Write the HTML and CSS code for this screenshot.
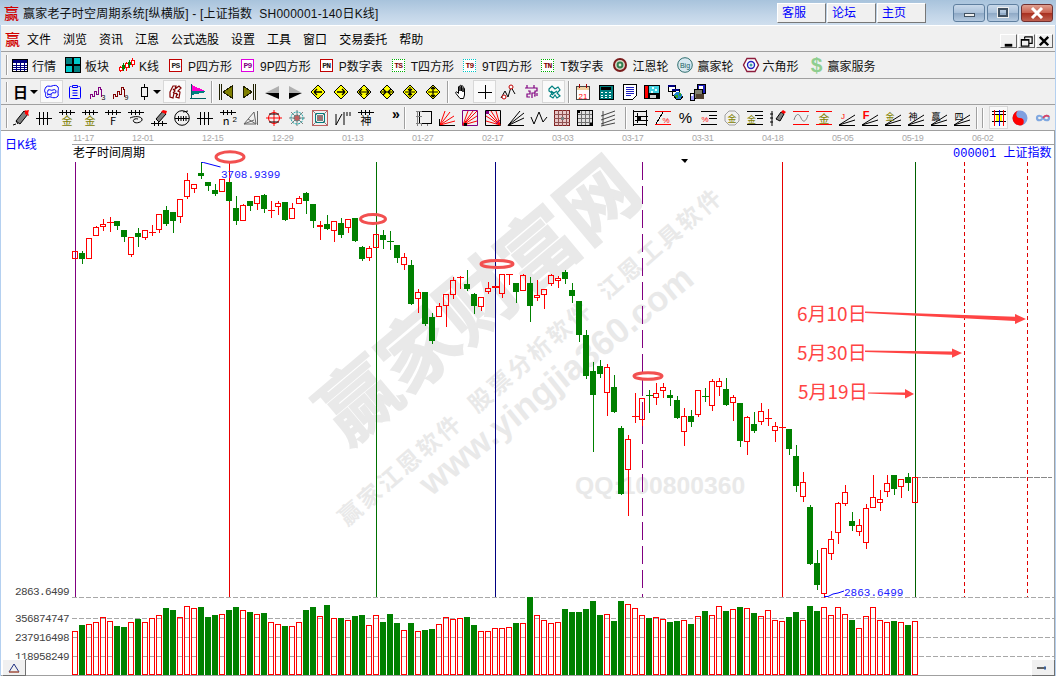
FILE: index.html
```html
<!DOCTYPE html>
<html lang="zh-CN">
<head>
<meta charset="utf-8">
<title>赢家老子时空周期系统</title>
<link rel="stylesheet" href="styles.css">
</head>
<body>
<div class="window">
  <header class="titlebar">
    <span class="applogo">赢</span>
    <span class="apptitle">赢家老子时空周期系统[纵横版] - [上证指数&nbsp; SH000001-140日K线]</span>
    <span class="linkbtn">客服</span><span class="linkbtn">论坛</span><span class="linkbtn">主页</span>
    <span class="wbtn wmin"><i></i></span><span class="wbtn wmax"><i></i></span>
    <span class="wbtn wclose"><svg width="14" height="12" viewBox="0 0 14 12"><path d="M2 1l10 10M12 1L2 11" stroke="#fff" stroke-width="3"/></svg></span>
  </header>

  <nav class="menubar">
    <span class="menulogo">赢</span>
    <span class="mi">文件</span><span class="mi">浏览</span><span class="mi">资讯</span><span class="mi">江恩</span><span class="mi">公式选股</span><span class="mi">设置</span><span class="mi">工具</span><span class="mi">窗口</span><span class="mi">交易委托</span><span class="mi">帮助</span>
    <span class="mdi mdi-first"><svg width="16" height="13" viewBox="0 0 16 13"><path d="M4 9h8v3H4z"/></svg></span>
    <span class="mdi"><svg width="16" height="13" viewBox="0 0 16 13"><path d="M6 1.500h8v7h-3M6 1.500v2M2.500 4.500h8v7h-8zM2.500 5h8" fill="none" stroke="#000" stroke-width="1.300"/></svg></span>
    <span class="mdi"><svg width="16" height="13" viewBox="0 0 16 13"><path d="M3 1.500l9 9M12 1.500l-9 9" stroke="#000" stroke-width="2.600"/></svg></span>
  </nav>

  <div class="toolbar tbtext">
    <i class="grip"></i>
    <span class="ti"><svg class="ic" viewBox="0 0 16 16"><path d="M.5 2.500h15v12H.5z" fill="#fff" stroke="#000"/><path d="M1 3h14v3H1z" fill="#000080"/><path d="M1 8.500h14M1 10.500h14M1 12.500h14M4.500 6v8M8.500 6v8M12.500 6v8" stroke="#000080"/></svg>行情</span>
    <span class="ti"><svg class="ic" viewBox="0 0 16 16"><path d="M.5.5h7v7h-7zM8.500.5h7v7h-7zM.5 8.500h7v7h-7zM8.500 8.500h7v7h-7z" stroke="#000"/><path d="M9 1h6v6H9zM1 9h6v6H1z" fill="#00c8c8"/><path d="M1 1h6v6H1zM9 9h6v6H9z" fill="#008080"/></svg>板块</span>
    <span class="ti ti-k"><svg class="ic" viewBox="0 0 16 16"><path d="M2.500 9v6M8.500 5v9M14.500 1v9" stroke="#f00"/><path d="M5.500 6v8M11.500 3v8" stroke="#008000"/><path d="M1 10h3v3H1zM7 6h3v4H7zM13 3h3v4h-3z" fill="#fff" stroke="#f00"/><path d="M4 8h3v4H4zM10 5h3v3h-3z" fill="#008000"/></svg>K线</span>
    <span class="ti ti-s"><span class="tag tag-ps">PS</span>P四方形</span>
    <span class="ti ti-s"><span class="tag tag-p9">P9</span>9P四方形</span>
    <span class="ti ti-s"><span class="tag tag-ps">PN</span>P数字表</span>
    <span class="ti ti-s"><span class="tag tag-ts">TS</span>T四方形</span>
    <span class="ti ti-s"><span class="tag tag-t9">T9</span>9T四方形</span>
    <span class="ti ti-s"><span class="tag tag-ts">TN</span>T数字表</span>
    <span class="ti"><svg class="ic sm" viewBox="0 0 16 16"><circle cx="8" cy="8" r="7" fill="#7a1c1c"/><circle cx="8" cy="8" r="5" fill="#d8d8c8"/><circle cx="8" cy="8" r="3.400" fill="#2f7f4f"/><circle cx="8" cy="8" r="1.400" fill="#e8e8d8"/></svg>江恩轮</span>
    <span class="ti"><svg class="ic sm" viewBox="0 0 16 16"><circle cx="8" cy="8" r="7.300" fill="#d8e8f0" stroke="#2f6f6f"/><text x="8" y="11" class="tiny tealtxt">Big</text></svg>赢家轮</span>
    <span class="ti"><svg class="ic sm" viewBox="0 0 16 16"><path d="M4 1.500h8L15.500 8 12 14.500H4L.5 8z" fill="#fff" stroke="#8c1c3c" stroke-width="1.400"/><circle cx="8" cy="8" r="3.500" fill="#fff" stroke="#2020c0" stroke-width="1.400"/><circle cx="8" cy="8" r="1.500" fill="#40a0a0"/></svg>六角形</span>
    <span class="ti ti-d"><span class="dollar">$</span>赢家服务</span>
  </div>

  <div class="toolbar">
    <i class="grip"></i>
    <span class="tb"><b class="ri">日</b></span><span class="ddarrow"></span>
    <span class="tb on"><svg class="ic sm" viewBox="0 0 16 16"><path d="M2 3c2-2 4 0 6-1s5-1 6 1 0 3 0 5 1 4-1 5-4 1-6 0-4 2-5 0 0-3-1-5 0-3 1-5zM4 6c2-1 3 1 5 0s3 0 3 2-3 0-4 1-2 2-4 1 0-2 0-4zM3 11c2-1 3 0 5 0" fill="none" stroke="#00f"/></svg></span>
    <span class="tb"><svg class="ic sm" viewBox="0 0 16 16"><path d="M4.500 2.500h-1a1 1 0 0 0-1 1v10a1 1 0 0 0 1 1h9a1 1 0 0 0 1-1v-10a1 1 0 0 0-1-1h-1M5.500 1.500h5v2h-5zM5.500 6.500h5M5.500 9h5M5.500 11.500h5" fill="none" stroke="#00f"/></svg></span>
    <span class="tb"><svg class="ic" viewBox="0 0 16 16"><path d="M.5 14.500v-4h2v2h2v-5h2v3h2v-7h2v2h1v7" fill="none" stroke="#800080" stroke-width="1"/><text x="11.500" y="15.500" class="micro">3</text></svg></span>
    <span class="tb"><svg class="ic" viewBox="0 0 16 16"><path d="M.5 14.500v-4h2v2h2v-5h2v3h2v-7h2v2h1v7" fill="none" stroke="#800000" stroke-width="1"/><text x="11.500" y="15.500" class="micro">9</text></svg></span>
    <span class="tb"><svg class="ic" viewBox="0 0 16 16"><path d="M8.500 0v4M8.500 12v4M5.500 3.500h6v9h-6z" fill="none" stroke="#000"/></svg></span><span class="ddarrow"></span>
    <span class="tb on"><svg class="ic sm" viewBox="0 0 16 16"><path d="M3 8l3-6h3l-1 3 4-3 2 2-3 3 2 1-1 6-3-1 1-3-3-1-1 5-3-1zM6 5l2 2-2 2M9 9l2 2" fill="none" stroke="#800000" stroke-width="1.200"/></svg></span>
    <span class="tb"><svg class="ic" viewBox="0 0 16 16"><path d="M2 1l13 6H2z" fill="#ff00d0"/><path d="M2 7h11l3 1-14 3z" fill="#008080"/><path d="M1.500 0v15M0 14.500h16" stroke="#006060"/></svg></span>
    <i class="sep"></i>
    <span class="tb"><svg class="ic" viewBox="0 0 16 16"><path d="M14 2L5 8l9 6z" fill="#808000" stroke="#202000"/><path d="M1 0h1v16H1zM3 0h1v16H3z" fill="#202000"/></svg></span>
    <span class="tb"><svg class="ic" viewBox="0 0 16 16"><path d="M2 2l9 6-9 6z" fill="#808000" stroke="#202000"/><path d="M12 0h1v16h-1zM14 0h1v16h-1z" fill="#202000"/></svg></span>
    <span class="tb"><svg class="ic sm" viewBox="0 0 16 16"><path d="M1 9l14-7v7z" fill="#b0b0b0"/><path d="M1 9l14 6V9z" fill="#000"/></svg></span>
    <span class="tb"><svg class="ic sm" viewBox="0 0 16 16"><path d="M15 9L2 2v7z" fill="#b0b0b0"/><path d="M15 9L2 15V9z" fill="#000"/></svg></span>
    <span class="tb"><svg class="ic sm" viewBox="0 0 16 16"><path d="M8 1l7 7-7 7-7-7z" fill="#ff0" stroke="#000"/><path d="M4 8h8M4 8l3-3M4 8l3 3" stroke="#000" stroke-width="1.300" fill="none"/></svg></span>
    <span class="tb"><svg class="ic sm" viewBox="0 0 16 16"><path d="M8 1l7 7-7 7-7-7z" fill="#ff0" stroke="#000"/><path d="M4 8h8M12 8L9 5M12 8l-3 3" stroke="#000" stroke-width="1.300" fill="none"/></svg></span>
    <span class="tb"><svg class="ic sm" viewBox="0 0 16 16"><path d="M8 1l7 7-7 7-7-7z" fill="#ff0" stroke="#000"/><path d="M3 8h10M3 8l3-3M3 8l3 3M13 8l-3-3M13 8l-3 3" stroke="#000" stroke-width="1.200" fill="none"/></svg></span>
    <span class="tb"><svg class="ic sm" viewBox="0 0 16 16"><path d="M8 1l7 7-7 7-7-7z" fill="#ff0" stroke="#000"/><path d="M2 8h12M7 8L4 5M7 8l-3 3M9 8l3-3M9 8l3 3" stroke="#000" stroke-width="1.200" fill="none"/></svg></span>
    <span class="tb"><svg class="ic sm" viewBox="0 0 16 16"><path d="M8 1l7 7-7 7-7-7z" fill="#ff0" stroke="#000"/><path d="M3 8h10M8 3v10M8 7L6 5M8 7l2-2M8 9l-2 2M8 9l2 2" stroke="#000" stroke-width="1.200" fill="none"/></svg></span>
    <span class="tb"><svg class="ic sm" viewBox="0 0 16 16"><path d="M8 1l7 7-7 7-7-7z" fill="#ff0" stroke="#000"/><path d="M3 8h10M8 3v10M8 3L6 5M8 3l2 2M8 13l-2-2M8 13l2-2" stroke="#000" stroke-width="1.200" fill="none"/></svg></span>
    <i class="sep sep-wide"></i>
    <span class="tb"><svg class="ic sm" viewBox="0 0 16 16"><path d="M6 14.500l-4-5c-1-1 0-2 1-1.500l1.500 1.500V3c0-1 1.500-1 1.500 0v4-5c0-1 1.500-1 1.500 0v5-4.500c0-1 1.500-1 1.500 0V8 4.500c0-1 1.500-1 1.500 0V11l-1 3.500z" fill="#fff" stroke="#000"/></svg></span>
    <span class="tb on"><svg class="ic" viewBox="0 0 16 16"><path d="M8 1v14M1 8h14" stroke="#000"/></svg></span>
    <span class="tb"><svg class="ic sm" viewBox="0 0 16 16"><path d="M1 14l4-7 3 6 3-10 4 7" fill="none" stroke="#000"/><circle cx="4" cy="13" r="2" fill="#fff" stroke="#c00000"/><circle cx="11" cy="3" r="2" fill="#fff" stroke="#c00000"/></svg></span>
    <span class="tb"><svg class="ic sm" viewBox="0 0 16 16"><path d="M2 4h12v3h-2v2H9v5M4 4V1M11 4V1M5 7h2v3H4v3h3M12 9v3h-1M14 9v3" fill="none" stroke="#800080" stroke-width="1.200"/></svg></span>
    <span class="tb on"><svg class="ic sm" viewBox="0 0 16 16"><path d="M3 5l3-3 3 3 3-2 2 3-3 3 3 3-3 2-2-3-2 3-3-2 2-3-3-2zM5 7l3 2 3-2M6 11l2-2" fill="none" stroke="#008080" stroke-width="1.200"/></svg></span>
    <i class="sep sep-wide"></i>
    <span class="tb"><svg class="ic" viewBox="0 0 16 16"><path d="M1.500 2.500h13v13h-13z" fill="#fff" stroke="#444"/><path d="M2 3h12v3H2z" fill="#f0d0a0"/><path d="M4.500 0v4M11.500 0v4" stroke="#a00000"/><text x="8" y="14.500" class="tiny redtxt">21</text></svg></span>
    <span class="tb"><svg class="ic" viewBox="0 0 16 16"><path d="M1 1h14v14H1z" fill="#008080" stroke="#000"/><path d="M3 3h10v3H3z" fill="#000"/><path d="M3 8h2v1H3zM7 8h2v1H7zM11 8h2v1h-2zM3 10.500h2v1H3zM7 10.500h2v1H7zM11 10.500h2v1h-2zM3 13h2v1H3zM7 13h2v1H7zM11 13h2v1h-2z" fill="#fff"/></svg></span>
    <span class="tb"><svg class="ic" viewBox="0 0 16 16"><path d="M2.500.5h13v11l-4 4h-9z" fill="#fff" stroke="#000"/><path d="M5 3.500h8M5 5.500h8M5 7.500h8M5 9.500h8M5 11.500h5" stroke="#2020c0"/></svg></span>
    <span class="tb"><svg class="ic" viewBox="0 0 16 16"><path d="M0 1h16v14H0z" fill="#000"/><path d="M1 2h3v12H1z" fill="#f00"/><path d="M5 2h10v7H5z" fill="#40d0e0"/><path d="M8 3h2v2H8zM11 5h2v2h-2zM7 7h2v2H7z" fill="#e0ffff"/><path d="M6 11h6v3H6z" fill="#d0d0d0"/></svg></span>
    <span class="tb"><svg class="ic" viewBox="0 0 16 16"><path d="M1 1h7v6H1zM5 5h7v6H5z" fill="#fff" stroke="#000"/><path d="M1 1h7v2H1zM5 5h7v2H5z" fill="#000080"/><circle cx="11" cy="12" r="4" fill="#2080d0"/><path d="M8 11h3v3H9zM12 9h2v3h-2z" fill="#30a030"/><path d="M7 12l2 3h5l2-3" fill="none" stroke="#000"/></svg></span>
    <span class="tb"><svg class="ic" viewBox="0 0 16 16"><path d="M7 0h8v9H7z" fill="#2020c0" stroke="#000"/><path d="M9 2h4v3H9z" fill="#fff"/><path d="M4 5h8v9H4z" fill="#808070" stroke="#000"/><path d="M0 9h4v7H0z" fill="#a0a0ff" stroke="#000"/><path d="M1 10h2v2H1z" fill="#fff"/><path d="M6 10h8v5H6z" fill="#504030"/></svg></span>
  </div>

  <div class="toolbar toolbar-last">
    <i class="grip"></i>
    <span class="tb"><svg class="ic sm" viewBox="0 0 16 16"><path d="M3 11L11 1l4 3-8 10z" fill="#808080" stroke="#000"/><path d="M11 1l4 3 1-4z" fill="#f00"/><path d="M12 0l3 3 1 3-4-2z" fill="#f00"/><path d="M0 15l3-1M3 11l2 3" stroke="#000" fill="none"/></svg></span>
    <span class="tb"><svg class="ic" viewBox="0 0 16 16"><path d="M0 8.500h16M3.500 2v13M7.500 2v13M11.500 2v13" stroke="#000"/></svg></span>
    <span class="tb"><svg class="ic" viewBox="0 0 16 16"><path d="M0 2.500h16M3.500 0v5M7.500 0v5M11.500 0v5" stroke="#000"/><text x="8" y="15" class="glyph olive">金</text></svg></span>
    <span class="tb"><svg class="ic" viewBox="0 0 16 16"><path d="M0 2.500h16M3.500 0v5M7.500 0v5M11.500 0v5" stroke="#000"/><text x="8" y="15" class="glyph olive">金</text></svg></span>
    <span class="tb"><svg class="ic" viewBox="0 0 16 16"><path d="M0 2.500h16M3.500 0v5M7.500 0v5M11.500 0v5" stroke="#000"/><text x="8" y="15" class="glyph">F</text></svg></span>
    <span class="tb"><svg class="ic sm" viewBox="0 0 16 16"><path d="M0 2.500h16M3.500 0v5M7.500 0v5M11.500 0v5" stroke="#000" shape-rendering="crispEdges"/><path d="M2 8c4-2 11-2 12 1s-6 5-8 3 1-4 4-3" fill="none" stroke="#000"/></svg></span>
    <span class="tb"><svg class="ic sm" viewBox="0 0 16 16"><path d="M5 9l7-8 3 3-7 8z" fill="#808080" stroke="#000"/><path d="M10 2l2-2 4 1-1 3z" fill="#f00"/><path d="M0 13.500h16M3.500 11v5M7.500 11v5M11.500 11v5" stroke="#000"/></svg></span>
    <span class="tb"><svg class="ic sm" viewBox="0 0 16 16"><circle cx="8" cy="8" r="7.300" fill="none" stroke="#000"/><path d="M1 8.500h14M4.500 6v5M7 6v5M9.500 6v5M12 6v5M9 2l5-1" stroke="#000"/></svg></span>
    <span class="tb"><svg class="ic" viewBox="0 0 16 16"><path d="M0 8.500h16M3.500 2v13M7.500 2v13M11.500 2v13" stroke="#000"/></svg></span>
    <span class="tb"><svg class="ic" viewBox="0 0 16 16"><path d="M0 2.500h16M3.500 0v5M7.500 0v5M11.500 0v5" stroke="#000"/><text x="6" y="15" class="glyph">n</text><text x="12.500" y="12" class="micro micro-b">2</text></svg></span>
    <span class="tb"><svg class="ic sm" viewBox="0 0 16 16"><path d="M1 14L11 2l2 12zM1 14l10-4M5 9l8 5M14.500 1v14" fill="none" stroke="#666"/></svg></span>
    <span class="tb"><svg class="ic sm" viewBox="0 0 16 16"><circle cx="8" cy="8" r="5.500" fill="none" stroke="#f00"/><path d="M0 8h16M8 0v16" stroke="#f00"/><path d="M3 4h10M3 12h10" stroke="#000"/></svg></span>
    <span class="tb"><svg class="ic sm" viewBox="0 0 16 16"><path d="M8 0v16M0 8h16M2 2l12 12M14 2L2 14" stroke="#808080"/><circle cx="8" cy="8" r="6" fill="none" stroke="#00a0a0" stroke-dasharray="2 1"/><circle cx="8" cy="8" r="3" fill="#c06060" stroke="#008080" stroke-dasharray="1 1"/></svg></span>
    <span class="tb"><svg class="ic" viewBox="0 0 16 16"><path d="M.5.5h15v15H.5z" fill="none" stroke="#c06060"/><path d="M3.500 3.500h9v9h-9z" fill="none" stroke="#008080"/><path d="M5.500 5.500h5v5h-5z" fill="#c06060" stroke="#808080"/><path d="M1 1l14 14M15 1L1 15" stroke="#808080"/></svg></span>
    <span class="tb"><svg class="ic sm" viewBox="0 0 16 16"><path d="M1 15L7 4M1 4v11M9 15V2M12 2v4M15 2v4" fill="none" stroke="#000"/></svg></span>
    <span class="tb"><svg class="ic" viewBox="0 0 16 16"><path d="M0 2.500h16M3.500 0v5M7.500 0v5M11.500 0v5" stroke="#000"/><text x="8" y="15" class="glyph redtxt">神</text></svg></span>
    <span class="more">»</span>
    <i class="sep sep-more"></i>
    <span class="tb"><svg class="ic" viewBox="0 0 16 16"><path d="M3.500 1.500h12v12h-12z" fill="none" stroke="#000"/><path d="M0 1.500h6M0 6.500h6M0 13.500h6M1.500 1v15M5.500 14v2M11.500 14v2" stroke="#808080"/></svg></span>
    <span class="tb"><svg class="ic sm" viewBox="0 0 16 16"><path d="M1 15l5-14M1 15L11 2M1 15l14-9M1 15l15-4" stroke="#f00"/><path d="M0 15.500h16M.5 9v7" stroke="#000"/></svg></span>
    <span class="tb"><svg class="ic sm" viewBox="0 0 16 16"><path d="M.5.5h15v15H.5z" fill="none" stroke="#800080"/><path d="M1 15L6 1M1 15L11 1M1 15L15 1M1 15L15 6M1 15l14-4" stroke="#f00"/><path d="M2 13h3v3H2z" fill="#000"/></svg></span>
    <span class="tb"><svg class="ic sm" viewBox="0 0 16 16"><path d="M.5.5h15v15H.5z" fill="none" stroke="#000"/><path d="M15 15L1 1M15 15L6 1M15 15L11 1M15 15L1 6M15 15L1 11" stroke="#f00"/><path d="M11 14l4-4" stroke="#800080"/><path d="M1 1h3v3H1z" fill="#800080"/></svg></span>
    <span class="tb"><svg class="ic sm" viewBox="0 0 16 16"><path d="M0 15.500h16M0 15.500L16 3M0 15.500L16 8M0 15.500L12 1" fill="none" stroke="#000"/></svg></span>
    <span class="tb"><svg class="ic sm" viewBox="0 0 16 16"><path d="M0 7l3 7 5-12 4 10 4-5" fill="none" stroke="#000"/></svg></span>
    <span class="tb"><svg class="ic" viewBox="0 0 16 16"><path d="M.5.5h15v15H.5z" fill="#e8c8c8" stroke="#802020"/><path d="M4.500 0v16M8.500 0v16M12.500 0v16M0 4.500h16M0 8.500h16M0 12.500h16" stroke="#905050"/><path d="M7 7h3v3H7z" fill="#808080"/></svg></span>
    <span class="tb"><svg class="ic" viewBox="0 0 16 16"><path d="M.5.5h15v15H.5z" fill="#e0e0e0" stroke="#000"/><path d="M4.500 1v14M8.500 1v14M12.500 1v14M1 4.500h14M1 8.500h14M1 12.500h14" stroke="#707070"/><path d="M0 0h3v3H0zM13 13h3v3h-3z" fill="#000"/></svg></span>
    <span class="tb"><svg class="ic sm" viewBox="0 0 16 16"><path d="M1 6L15 1M1 10L15 5M1 14L15 9M1 16L15 13M3 1v15" fill="none" stroke="#444"/></svg></span>
    <i class="sep sep-mid"></i>
    <span class="tb"><svg class="ic" viewBox="0 0 16 16"><path d="M1 0v16M14 0v16M1 1.500h13M1 14.500h13M3 6.500h13M3 10.500h13M5 3v10" stroke="#000"/><path d="M6 7h2v3H6z" stroke="#000"/></svg></span>
    <span class="tb"><svg class="ic" viewBox="0 0 16 16"><path d="M0 1.500h16M0 14.500h16" stroke="#f00"/><path d="M1 14L8 2" stroke="#000"/><text x="11" y="13" class="tiny redtxt">%</text></svg></span>
    <span class="tb"><b class="pct">%</b></span>
    <span class="tb"><svg class="ic" viewBox="0 0 16 16"><path d="M0 1.500h16M8 5.500h8M8 8.500h8M0 14.500h16" stroke="#000"/><text x="4" y="12" class="tiny redtxt">%</text></svg></span>
    <span class="tb"><svg class="ic sm" viewBox="0 0 16 16"><path d="M5 1h6l4 4v6l-4 4H5l-4-4V5z" fill="none" stroke="#a0a0a0"/><text x="8" y="12" class="glyph olive glyph-s">金</text></svg></span>
    <span class="tb"><svg class="ic" viewBox="0 0 16 16"><path d="M0 1.500h16M8 5.500h8M10 8.500h6M0 14.500h16" stroke="#000"/><text x="4.500" y="13" class="glyph olive glyph-s">金</text></svg></span>
    <span class="tb"><svg class="ic sm" viewBox="0 0 16 16"><path d="M2 1v15M0 4h3M0 8h3M0 12h3" stroke="#000"/><path d="M6 9l5-7 3 2-4 7z" fill="#808080" stroke="#000"/><path d="M11 2l2-2 3 2-2 2z" fill="#f00"/></svg></span>
    <span class="tb"><svg class="ic sm" viewBox="0 0 16 16"><path d="M0 1.500h16M0 14.500h16" stroke="#f00"/><path d="M1 10c2-7 5-7 7-2s5 4 7-3" fill="none" stroke="#808080"/></svg></span>
    <span class="tb"><svg class="ic" viewBox="0 0 16 16"><path d="M0 1.500h16M0 14.500h16" stroke="#f00"/><text x="8" y="12.500" class="glyph olive">金</text></svg></span>
    <span class="tb"><svg class="ic sm" viewBox="0 0 16 16"><path d="M0 15L16 5M0 15l16-5M0 15.500h16" fill="none" stroke="#000"/><text x="4" y="9" class="tiny redtxt">J</text></svg></span>
    <span class="tb"><svg class="ic sm" viewBox="0 0 16 16"><path d="M0 15L16 5M0 15l16-5M0 15.500h16" fill="none" stroke="#000"/><text x="4" y="9" class="tiny redtxt boldtxt">F</text></svg></span>
    <span class="tb"><svg class="ic sm" viewBox="0 0 16 16"><path d="M0 15L16 5M0 15l16-5M0 15.500h16" fill="none" stroke="#000"/><text x="5" y="10" class="glyph olive glyph-s">金</text></svg></span>
    <span class="tb"><svg class="ic sm" viewBox="0 0 16 16"><path d="M0 15L16 5M0 15l16-5M0 15.500h16" fill="none" stroke="#000"/><text x="5" y="10" class="glyph redtxt glyph-s">神</text></svg></span>
    <span class="tb"><svg class="ic sm" viewBox="0 0 16 16"><path d="M0 15L16 5M0 15l16-5M0 15.500h16" fill="none" stroke="#000"/><text x="5" y="10" class="glyph redtxt glyph-s">赢</text></svg></span>
    <span class="tb"><svg class="ic sm" viewBox="0 0 16 16"><path d="M0 15L16 5M0 15l16-5M0 15.500h16" fill="none" stroke="#000"/><text x="5" y="10" class="glyph redtxt glyph-s">四</text></svg></span>
    <i class="sep sep-wide"></i><i class="grip grip-end"></i>
    <span class="tb on tb-grid"><svg class="ic" viewBox="0 0 16 16"><path d="M5 5h6v6H5z" fill="#ff0"/><path d="M1 4.500h14M1 11.500h14M1 1.500h14" stroke="#000"/><path d="M3.500 0v16M12.500 0v16" stroke="#f00"/><path d="M8.500 0v16" stroke="#00f"/></svg></span>
    <span class="tb"><svg class="ic sm" viewBox="0 0 16 16"><circle cx="8" cy="8" r="7.500" fill="#80a0e0"/><path d="M8 .5a7.500 7.500 0 0 0 0 15 3.750 3.750 0 0 0 0-7.500 3.750 3.750 0 0 1 0-7.500z" fill="#f00"/><circle cx="8" cy="4.300" r="1.300" fill="#80a0e0"/><circle cx="8" cy="11.700" r="1.300" fill="#f00"/></svg></span>
    <span class="tb"><svg class="ic sm" viewBox="0 0 16 16"><path d="M8 8c-2-3-6-3-6 0s4 3 6 0 6-3 6 0-4 3-6 0" fill="none" stroke="#80a8e0" stroke-width="2.200"/><path d="M8 8c2-3 5-3 6-1" fill="none" stroke="#e04060" stroke-width="1.600"/></svg></span>
  </div>

  <main class="chart">
    <svg class="chartsvg" viewBox="0 130 1056 546" width="1056" height="546" xmlns="http://www.w3.org/2000/svg">
      <g class="wm">
        <text class="wm-big" transform="translate(347 447) rotate(-40)">赢家财富网</text>
        <text class="wm-mid" transform="translate(347 527) rotate(-41)">赢家江恩软件  股票分析软件  江恩工具软件</text>
        <text class="wm-url" transform="translate(431 497) rotate(-39)">www.yingjia360.com</text>
        <text class="wm-qq" x="575" y="494">QQ:100800360</text>
      </g>

      <path class="rule" d="M0 130.500H1055M72 144.500H1055M0 675.500H1055M1054.500 130V676"/>
      <g id="dates" class="dates"></g>
      <text class="kind" x="5" y="149">日K线</text>
      <text class="head" x="73" y="157">老子时间周期</text>
      <text class="stock" x="953" y="157">000001&nbsp;上证指数</text>
      <path class="marker" d="M681 159h7l-3 4z"/>

      <path class="grid" d="M72 597.500H1054M72 618.500H1054M72 637.500H1054M72 656.500H1054"/>
      <path class="lastline" d="M915 477.500H1052"/>

      <path class="v v-purple" d="M75.500 162V597"/>
      <path class="v v-red" d="M229.500 162V597M782.500 162V597"/>
      <path class="v v-green" d="M376.500 162V597"/>
      <path class="v v-navy" d="M495.500 162V597"/>
      <path class="v v-dash" d="M642.500 162V597"/>
      <path class="v v-dgreen" d="M915.500 162V597"/>
      <path class="v v-dot" d="M964.500 162V597M1027.500 162V597"/>

      <g id="bars" class="crisp"></g>
      <g id="candles" class="crisp"></g>

      <path class="callout" d="M201.500 162.500h2l17 4.500"/>
      <text class="val" x="221" y="178">3708.9399</text>
      <path class="callout" d="M824 596.500h4l5-2.500 5-1 6-2"/>
      <text class="val" x="844" y="596">2863.6499</text>

      <text class="axis" x="15" y="595">2863.6499</text>
      <text class="axis" x="15" y="622">356874747</text>
      <text class="axis" x="15" y="641">237916498</text>
      <text class="axis" x="15" y="660">118958249</text>

      <ellipse class="ring" cx="230" cy="157" rx="14" ry="5.200"/>
      <ellipse class="ring" cx="373" cy="219" rx="12.500" ry="4.500"/>
      <ellipse class="ring" cx="497" cy="264" rx="16" ry="3.400"/>
      <ellipse class="ring" cx="648" cy="376" rx="14" ry="3.300"/>

      <text class="note" x="797" y="321">6月10日</text>
      <text class="note" x="797" y="360">5月30日</text>
      <text class="note" x="798" y="399">5月19日</text>
      <path class="arrow" d="M865 311.600L1015 316.800V314L1026 319L1015 324V321L865 313Z"/>
      <path class="arrow" d="M865 350.600L952 351.400V348.500L962 353L952 357.700V354.800L865 352Z"/>
      <path class="arrow" d="M868 392.400L905 392.400V389L914 394L905 398.600V395L868 393.600Z"/>
    </svg>
    <span class="scroll scroll-left"><svg width="12" height="10" viewBox="0 0 12 10"><path d="M6 1L1 9h10z" fill="none" stroke="#203080"/><path d="M1 9h10" stroke="#e06020"/></svg></span>
    <span class="scroll scroll-right"><svg width="12" height="10" viewBox="0 0 12 10"><path d="M0 5h9" stroke="#303030" stroke-width="1.500"/><path d="M8 3v4" stroke="#2060c0"/></svg></span>
  </main>
</div>
<script src="chart.js"></script>
</body>
</html>
```
FILE: styles.css
```css
* { box-sizing: border-box; }
html, body { margin: 0; padding: 0; overflow: hidden; }
body {
  width: 1056px; height: 676px;
  font: 12px "Liberation Sans", "Noto Sans CJK SC", sans-serif;
  color: #000; background: #f0f0f0;
}
.window { position: relative; display: flex; flex-direction: column; height: 676px; }
.window::after {
  content: ""; position: absolute; inset: 25px 0 0 0; pointer-events: none;
  border-left: 1px solid #b4d0f0; border-right: 1px solid #b4d0f0;
}

.titlebar {
  height: 25px; flex: none; display: flex; align-items: center; padding-left: 4px;
  background: linear-gradient(180deg, #a8c3dc 0%, #c2d5e8 60%, #d0dfee 100%);
}
.applogo { width: 19px; font: 500 15px "Noto Sans CJK SC", sans-serif; color: #d00000; line-height: 20px; }
.apptitle { flex: 1; color: #111; font-size: 12px; white-space: pre; letter-spacing: .2px; }
.linkbtn {
  width: 49px; height: 20px; margin-right: 1px; padding-left: 4px; line-height: 19px;
  color: #0000ff; background: #f0f0f0; font-size: 12px;
  border: 1px solid; border-color: #fff #777 #777 #fff;
}
.linkbtn:nth-of-type(5) { margin-right: 27px; }
.wbtn {
  width: 32px; height: 18px; margin-right: 2px; display: flex; align-items: center; justify-content: center;
  border: 1px solid #5f7f9f; border-radius: 3px;
  background: linear-gradient(180deg, #c9d9ea 0%, #a9c0d9 50%, #8fa9c6 52%, #b5cae0 100%);
}
.wmin i { width: 11px; height: 4px; background: #eee; border: 1px solid #405060; margin-top: 5px; }
.wmax i { width: 10px; height: 9px; background: transparent; border: 2px solid #405060; box-shadow: 0 0 0 1px #eee; }
.wclose { background: linear-gradient(180deg, #e0a090 0%, #c9604f 50%, #a83020 52%, #c06050 100%); border-color: #703030; margin-right: 3px; }

.menubar {
  height: 27px; flex: none; display: flex; align-items: center; padding-left: 5px;
  background: #f0f0f0; border-top: 1px solid #fff; border-bottom: 1px solid #a0a0a0;
}
.menulogo { width: 22px; font: 500 15px "Noto Sans CJK SC", sans-serif; color: #d00000; }
.mi { margin-right: 12px; white-space: nowrap; }
.mdi {
  width: 17px; height: 14px; margin-right: 1px; display: flex; align-items: center; justify-content: center;
  background: #f0f0f0; border: 1px solid; border-color: #fff #666 #666 #fff; margin-top: 5px;
}
.mdi-first { margin-left: auto; }
.mdi:last-child { margin-right: 3px; }

.toolbar {
  height: 26px; flex: none; display: flex; align-items: center; padding-left: 6px;
  background: #f0f0f0; border-bottom: 1px solid #a0a0a0;
}
.toolbar-last { border-bottom: 0; height: 25px; }
.tbtext { height: 27px; }
.grip { width: 2px; height: 20px; margin-right: 1px; flex: none; border-left: 1px solid #a0a0a0; border-right: 1px solid #fff; }
.grip-end { margin-left: 3px; margin-right: 5px; }
.ic { width: 16px; height: 16px; display: block; flex: none; overflow: visible; shape-rendering: crispEdges; }
.ic.sm { shape-rendering: auto; }
.ti { display: flex; align-items: center; gap: 4px; margin-right: 9px; white-space: nowrap; color: #111; }
.tbtext .grip { margin-right: 4px; }
.ti-k { gap: 5px; margin-right: 10px; }
.ti-s { gap: 6px; margin-right: 9px; }
.ti-d { gap: 5px; margin-left: 3px; }
.tag {
  width: 13px; height: 13px; flex: none; display: flex; align-items: center; justify-content: center;
  font: bold 8px "Liberation Mono", monospace; letter-spacing: -.8px;
  border: 1px solid; background: #fff; color: #800000;
}
.tag-ps { border-color: #c00000; color: #222; }
.tag-p9 { border-color: #e000e0; color: #800080; }
.tag-ts { border: 1px dotted #00b000; }
.tag-t9 { border: 1px dotted #00c8c8; }
.dollar { width: 12px; font: bold 21px/20px "Liberation Sans", sans-serif; color: #8fce8f; text-align: center; }

.tb { width: 23px; height: 23px; flex: none; display: flex; align-items: center; justify-content: center; }
.tb.on { background: #fafafa; border: 1px solid #d8d8d8; }
.ri { font: bold 15px "Noto Sans CJK SC", sans-serif; }
.pct { font: 15px "Liberation Sans", sans-serif; }
.ddarrow {
  width: 8px; height: 4px; flex: none; margin: 0 2px 0 -2px;
  border-left: 4px solid transparent; border-right: 4px solid transparent; border-top: 4px solid #000;
}
.sep { width: 2px; height: 22px; flex: none; margin: 0 1px 0 2px; border-left: 1px solid #a0a0a0; border-right: 1px solid #fff; }
.sep-wide { margin: 0 1px 0 3px; }
.sep-more { margin: 0 6px 0 0; }
.sep-mid { margin: 0 1px 0 6px; }
.more { width: 16px; font-size: 14px; font-weight: bold; text-align: center; line-height: 14px; margin: -8px 0 0 11px; }
.tb-grid { width: 19px; }

.micro { font: 7px "Liberation Sans", sans-serif; fill: #000; }
.micro-b { font-size: 8px; }
.tiny { font: 8px "Liberation Sans", sans-serif; text-anchor: middle; }
.boldtxt { font-weight: bold; font-size: 11px; }
.redtxt { fill: #f00; }
.tealtxt { fill: #206060; font-size: 7px; }
.glyph { font: 11px "Noto Sans CJK SC", "Liberation Sans", sans-serif; text-anchor: middle; fill: #000; }
.glyph-s { font-size: 9px; }
.olive { fill: #808000; }

.chart { position: relative; height: 546px; flex: none; background: #fff; }
.chartsvg { display: block; }
.crisp { shape-rendering: crispEdges; }
.rule { stroke: #a0a0a0; fill: none; shape-rendering: crispEdges; }
.dates text { font: 9px "Liberation Sans", sans-serif; fill: #a8a8a8; letter-spacing: -.3px; }
.kind { font: 12px "Noto Sans CJK SC", sans-serif; fill: #0000ff; }
.head { font: 12px "Noto Sans CJK SC", sans-serif; fill: #000; }
.stock { font: 12px "Liberation Mono", "Noto Sans CJK SC", monospace; fill: #0000ff; }
.marker { fill: #000; }
.grid { stroke: #a8a8a8; stroke-dasharray: 5 2; fill: none; shape-rendering: crispEdges; }
.lastline { stroke: #888; stroke-dasharray: 6 1; fill: none; shape-rendering: crispEdges; }
.v { fill: none; stroke-width: 1; shape-rendering: crispEdges; }
.v-purple { stroke: #800080; }
.v-red { stroke: #e80000; }
.v-green { stroke: #007000; }
.v-navy { stroke: #000080; }
.v-dash { stroke: #800080; stroke-dasharray: 18 6; }
.v-dgreen { stroke: #006000; }
.v-dot { stroke: #e00000; stroke-dasharray: 4 3; }
.callout { stroke: #0000ff; fill: none; }
.val { font: 11px "Liberation Mono", monospace; fill: #2020ff; }
.axis { font: 11px "Liberation Mono", monospace; fill: #444; letter-spacing: -.6px; }
.ring { fill: none; stroke: #f25050; stroke-width: 3; }
.note { font: 19px "Noto Sans CJK SC", sans-serif; fill: #f44; }
.arrow { fill: #f44; }
.wm text { fill: #e9e9e9; }
.wm-big { font: bold 78px "Noto Sans CJK SC", sans-serif; stroke: #e9e9e9; stroke-width: 1.500; }
.wm-mid { font: bold 23px "Noto Sans CJK SC", sans-serif; white-space: pre; letter-spacing: 3px; }
.wm-url { font: bold 35px "Liberation Sans", sans-serif; }
.wm-qq { font: bold 24.700px "Liberation Sans", sans-serif; }

.scroll {
  position: absolute; bottom: 0; width: 24px; height: 17px; display: flex; align-items: center; justify-content: center;
  background: #f0f0f0; border: 1px solid; border-color: #fff #707070 #707070 #fff;
}
.scroll-left { left: 2px; }
.scroll-right { left: 1031px; }
```
FILE: chart.js
```js
// r/g, wick high, body top, body bottom, wick low
var candles = [
["r",251,251,259,259],["g",251,253,259,263],["r",238,238,259,259],["r",226,227,236,236],["r",219,224,227,230],
["r",217,222,222,231],["g",221,221,226,229],["g",230,230,237,241],["r",237,237,255,256],["g",228,233,237,246],
["r",230,230,238,239],["r",225,232,232,235],["r",214,214,230,232],["g",206,210,224,225],["g",212,212,221,232],
["r",199,199,217,222],["r",173,180,197,198],["r",184,184,189,192],["g",162,173,176,178],["g",182,182,186,190],
["g",184,190,194,195],["r",179,179,192,192],["g",182,182,201,201],["g",196,208,221,224],["r",204,205,221,221],
["g",201,201,206,210],["r",196,196,204,209],["g",194,195,209,212],["r",201,210,210,217],["r",201,203,207,214],
["g",202,202,220,220],["r",203,208,219,219],["r",196,198,204,204],["g",192,193,201,213],["g",204,204,221,227],
["r",221,225,227,239],["g",215,224,229,229],["r",221,221,231,241],["g",218,223,235,237],["r",219,219,228,232],
["g",218,218,241,241],["g",246,247,259,260],["r",246,248,258,260],["r",234,234,248,248],["g",230,235,240,248],
["g",231,241,241,249],["g",245,245,258,262],["r",253,257,265,269],["g",260,265,304,304],["r",289,292,299,312],
["g",292,292,324,325],["g",313,317,341,343],["r",303,306,317,317],["r",294,294,306,326],["r",277,280,295,298],
["r",276,277,277,288],["g",270,284,289,290],["g",293,294,306,313],["r",297,297,307,310],["r",282,288,292,293],
["r",286,286,287,287],["r",274,274,294,297],["r",274,274,274,284],["g",283,283,292,302],["r",274,275,291,291],
["g",277,283,306,321],["r",280,295,298,300],["r",289,289,295,308],["r",274,275,284,285],["r",276,278,281,287],
["g",270,272,279,283],["g",283,290,296,302],["g",301,301,335,341],["g",330,335,376,378],["g",362,371,395,451],
["g",360,366,374,377],["r",364,367,393,415],["g",375,387,412,412],["g",426,428,494,494],["r",435,439,470,515],
["r",393,416,416,422],["r",398,398,420,425],["g",390,395,395,412],["r",383,393,398,404],["r",383,387,391,397],
["g",390,395,398,405],["g",396,400,418,418],["r",408,416,432,445],["g",410,416,422,426],["r",390,390,415,416],
["g",388,396,396,401],["r",379,381,406,410],["r",378,381,387,395],["g",378,389,405,405],["r",395,397,403,420],
["g",403,403,441,446],["r",416,417,442,454],["g",412,424,431,432],["r",403,411,422,424],["r",409,418,418,425],
["r",422,426,431,441],["r",427,427,427,427],["g",429,429,449,454],["g",445,456,486,491],["r",472,482,497,501],
["g",505,507,564,564],["g",550,563,585,589],["r",548,548,594,597],["r",531,539,554,559],["r",502,503,533,543],
["r",485,492,504,505],["g",512,521,526,530],["r",519,525,532,535],["r",504,508,543,548],["r",475,497,508,508],
["r",490,499,503,510],["r",475,483,492,496],["g",475,475,489,494],["r",479,479,487,497],["g",473,477,483,490],
["r",477,477,503,503]
];
var volumes = [
631,625,624,622,617,621,626,627,622,619,622,618,615,608,610,617,606,608,607,617,
615,614,610,607,610,612,614,613,622,624,626,626,622,610,607,616,605,618,618,620,
616,615,625,615,622,614,623,630,623,631,630,629,624,617,619,618,617,625,631,631,
628,628,627,623,623,597,615,620,623,622,609,612,612,609,601,615,614,621,601,604,
608,615,618,617,619,622,621,620,624,616,611,615,606,611,609,607,608,613,616,610,
620,621,617,612,620,606,611,607,615,607,614,620,628,616,607,620,622,621,622,625,621
];
var dates = ["11-17","12-01","12-15","12-29","01-13","01-27","02-17","03-03","03-17","03-31","04-18","05-05","05-19","06-02"];
var RED = "#ff0000", GREEN = "#008000";

function rect(x, y, w, h, fill, stroke) {
  return '<rect x="' + x + '" y="' + y + '" width="' + w + '" height="' + h + '" fill="' + fill + '"' +
    (stroke ? ' stroke="' + stroke + '"' : '') + '/>';
}

var candleSvg = "";
candles.forEach(function (c, i) {
  var x = 75 + 7 * i, col = c[0] === "r" ? RED : GREEN;
  if (c[3] - c[2] <= 1) {
    candleSvg += rect(x, c[1], 1, c[4] - c[1] + 1, col) + rect(x - 3, c[2], 7, c[3] - c[2] + 1, col);
  } else if (c[0] === "g") {
    candleSvg += rect(x, c[1], 1, c[4] - c[1] + 1, col) + rect(x - 3, c[2], 6, c[3] - c[2], col);
  } else {
    if (c[2] > c[1]) candleSvg += rect(x, c[1], 1, c[2] - c[1], col);
    if (c[4] > c[3]) candleSvg += rect(x, c[3], 1, c[4] - c[3] + 1, col);
    candleSvg += rect(x - 2.5, c[2] + 0.5, 5, c[3] - c[2] - 1, "none", col);
  }
});
document.getElementById("candles").innerHTML = candleSvg;

var barSvg = "";
volumes.forEach(function (top, i) {
  var x = 75 + 7 * i;
  barSvg += candles[i][0] === "g"
    ? rect(x - 3, top, 6, 675 - top, GREEN)
    : rect(x - 2.5, top + 0.5, 5, 674 - top, "none", RED);
});
document.getElementById("bars").innerHTML = barSvg;

document.getElementById("dates").innerHTML = dates.map(function (d, i) {
  return '<text x="' + (i === 0 ? 73 : 62 + 70 * i) + '" y="141">' + d + '</text>';
}).join("");
```
